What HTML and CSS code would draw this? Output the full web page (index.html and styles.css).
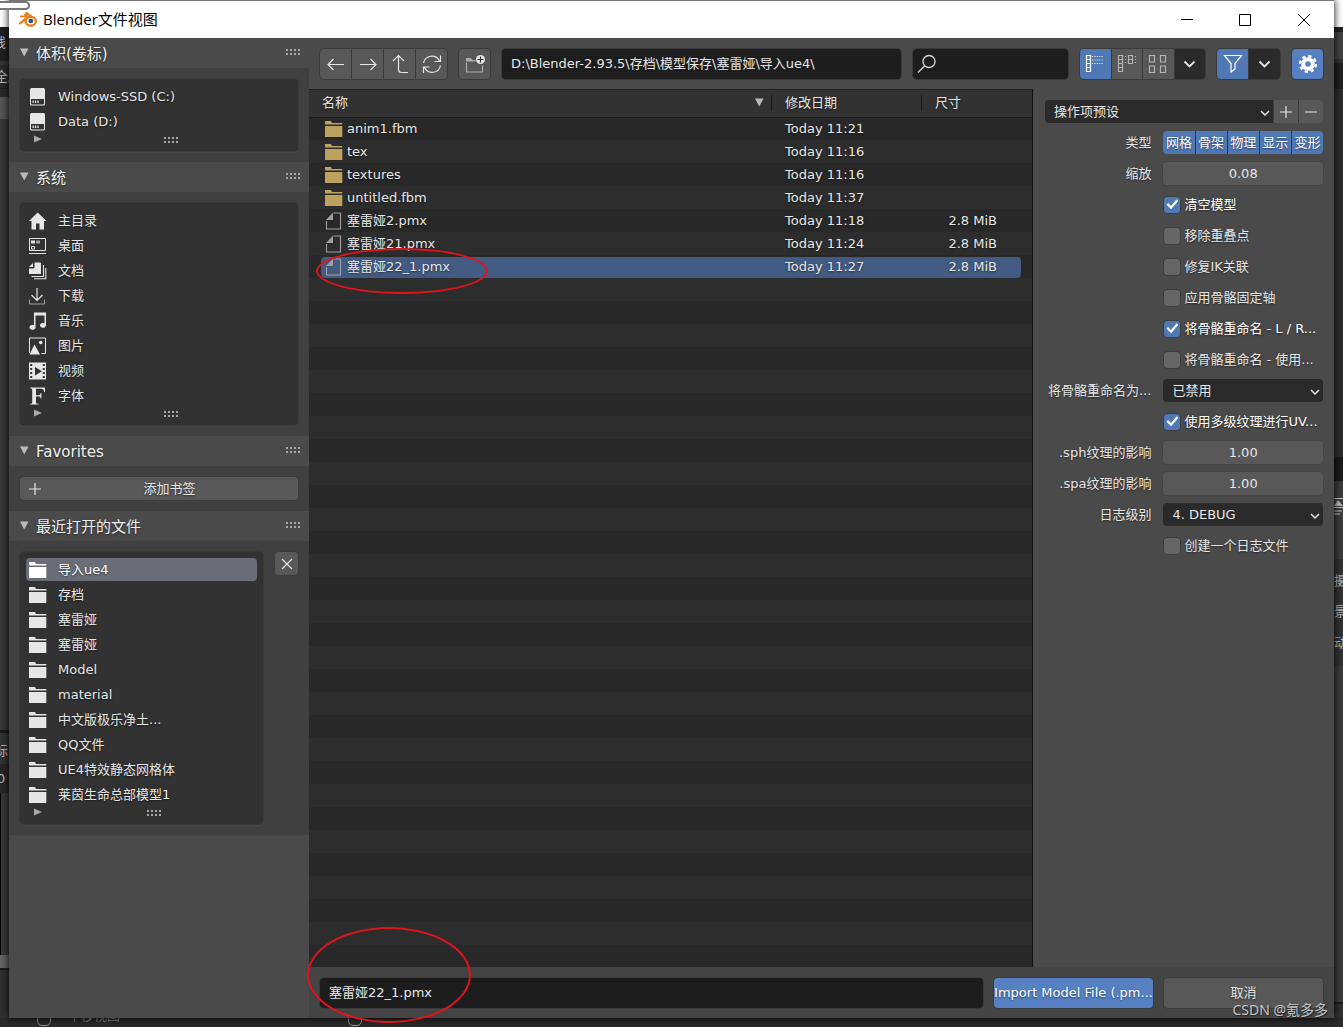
FILE: index.html
```html
<!DOCTYPE html>
<html lang="zh-CN">
<head>
<meta charset="utf-8">
<title>Blender文件视图</title>
<link rel="stylesheet" href="styles.css">
</head>
<body>
<svg class="sprite" aria-hidden="true">
  <symbol id="tri-down" viewBox="0 0 9 9"><path d="M0 0.500H8.500L4.250 8.500z"/></symbol>
  <symbol id="tri-right" viewBox="0 0 8 8"><path d="M0 0.500V7.500L8 4z"/></symbol>
  <symbol id="chevron" viewBox="0 0 12 8"><path d="M2 2l4 4 4-4" fill="none" stroke="currentColor" stroke-width="1.500"/></symbol>
  <symbol id="disk" viewBox="0 0 18 18"><path d="M2.500 0h12A1.500 1.500 0 0 1 16 1.500V16a1.500 1.500 0 0 1-1.500 1.500h-12A1.500 1.500 0 0 1 1 16V1.500A1.500 1.500 0 0 1 2.500 0zM2 11v4.500a1 1 0 0 0 1 1h11a1 1 0 0 0 1-1V11z" fill-rule="evenodd"/><path d="M3.500 12.500h1.300v2.500H3.500zM5.900 12.500h1.300v2.500H5.900zM8.300 12.500h1.300v2.500H8.300z"/></symbol>
  <symbol id="home" viewBox="0 0 18 18"><path d="M8.700 0.500L0 9h2.500v8.500H7v-6h3.500v6h4.500V9h2.500z"/></symbol>
  <symbol id="desktop" viewBox="0 0 18 18"><path d="M0.500 1.500h16v12h-16zM0 16.500h17" fill="none" stroke="currentColor" stroke-width="1"/><path d="M2 3.500h4v3H2z"/><path d="M7 3.500h4v3H7z" opacity=".6"/><path d="M2.500 9.500h3v2.500h-3z" fill="none" stroke="currentColor"/></symbol>
  <symbol id="docs" viewBox="0 0 18 18"><path d="M5.500 0.500H11a1 1 0 0 1 1 1V12H0V6.500h4.500a1 1 0 0 0 1-1z"/><path d="M4 1v4H0z"/><path d="M14.500 3v11.500H2.500M16.800 6v10.800H5" fill="none" stroke="currentColor" stroke-width="1.100"/></symbol>
  <symbol id="download" viewBox="0 0 18 18"><path d="M8 1v12M2.500 8L8 13.500 13.500 8" fill="none" stroke="currentColor" stroke-width="1.200"/><path d="M0.500 12.500v4.500h15v-4.500" fill="none" stroke="currentColor" opacity=".6"/></symbol>
  <symbol id="music" viewBox="0 0 18 18"><path d="M5 0.500h12v13a3 2.500 0 1 1-1.500-2.300V3.500h-9v12a3 2.500 0 1 1-1.500-2.300z"/></symbol>
  <symbol id="picture" viewBox="0 0 18 18"><path d="M0.500 16V1h16v15.500h-4" fill="none" stroke="currentColor"/><path d="M0.500 17.500l5-10 5.500 10z"/><circle cx="11.700" cy="5.500" r="1.800"/></symbol>
  <symbol id="video" viewBox="0 0 18 18"><path d="M0 0.500h17V17.500H0zM1.200 2v2h2V2zm0 4v2h2V6zm0 4v2h2v-2zm0 4v2h2v-2zM13.800 2v2h2V2zm0 4v2h2V6zm0 4v2h2v-2zm0 4v2h2v-2zM6 5v8.500l7-4.200z" fill-rule="evenodd"/></symbol>
  <symbol id="font" viewBox="0 0 18 18"><path d="M1 0.500h15v4.500h-.8c-.4-2.300-1.200-3.200-3.200-3.200H7v6.400h2.500c1.500 0 2-.7 2.200-2.200h.7v5.600h-.7c-.2-1.600-.8-2.200-2.200-2.200H7v5.600c0 1.400.5 1.700 2.500 1.800v.8H1v-.8c1.700-.1 2.200-.4 2.200-1.800V3.300c0-1.400-.5-1.800-2.200-2z"/></symbol>
  <symbol id="folder" viewBox="0 0 18 18"><path d="M0 1h6l1 2H17.300v1.500H0z"/><path d="M0 6h17.300v11H0z"/></symbol>
  <symbol id="file" viewBox="0 0 18 18"><path d="M8.500 1h7v16H1.500V9" fill="none" stroke="currentColor" stroke-width="1.100"/><path d="M8 0.500V8H1z"/></symbol>
  <symbol id="dots" viewBox="0 0 15 7"><path d="M0 0h2v2H0zM4 0h2v2H4zM8 0h2v2H8zM12 0h2v2h-2zM0 4h2v2H0zM4 4h2v2H4zM8 4h2v2H8zM12 4h2v2h-2z"/></symbol>
</svg>

<div class="desk desk-left" aria-hidden="true">
  <div class="l-white"></div><div class="l-tab">线</div><div class="l-tool">全局</div>
  <div class="l-chip"></div><div class="l-view"></div><div class="l-label">标</div><div class="l-num">0</div>
  <div class="l-track"></div><div class="l-scroll"></div><div class="l-foot"></div>
</div>

<main class="window">
  <header class="titlebar">
    <svg class="logo" viewBox="0 0 20 16"><path d="M1 4.200h8L6.500 2.300 8 0.500l8.500 6.200" fill="none" stroke="#ea7f13" stroke-width="2"/><path d="M0.500 12L9 5" stroke="#ea7f13" stroke-width="2.400"/><ellipse cx="12.300" cy="9.300" rx="5.400" ry="4.700" fill="#fff" stroke="#ea7f13" stroke-width="2.400"/><ellipse cx="12.500" cy="9" rx="2.600" ry="2.300" fill="#265787"/></svg>
    <h1>Blender文件视图</h1>
    <button aria-label="最小化"><svg viewBox="0 0 12 12"><path d="M0 5.500h12"/></svg></button>
    <button aria-label="最大化"><svg viewBox="0 0 12 12"><path d="M0.500 0.500h11v11H0.500z"/></svg></button>
    <button aria-label="关闭"><svg viewBox="0 0 12 12"><path d="M0 0l12 12M12 0L0 12"/></svg></button>
  </header>

  <div class="content">
    <aside class="sidebar">
      <section>
        <h2><svg class="tri"><use href="#tri-down"/></svg><span>体积(卷标)</span><svg class="grip"><use href="#dots"/></svg></h2>
        <div class="pane"><div class="box">
          <ul>
            <li><a href="#c"><svg><use href="#disk"/></svg>Windows-SSD (C:)</a></li>
            <li><a href="#d"><svg><use href="#disk"/></svg>Data (D:)</a></li>
          </ul>
          <div class="box-foot"><svg class="more"><use href="#tri-right"/></svg><svg class="grip"><use href="#dots"/></svg></div>
        </div></div>
      </section>
      <section>
        <h2><svg class="tri"><use href="#tri-down"/></svg><span>系统</span><svg class="grip"><use href="#dots"/></svg></h2>
        <div class="pane"><div class="box">
          <ul>
            <li><a href="#home"><svg><use href="#home"/></svg>主目录</a></li>
            <li><a href="#desktop"><svg><use href="#desktop"/></svg>桌面</a></li>
            <li><a href="#docs"><svg><use href="#docs"/></svg>文档</a></li>
            <li><a href="#download"><svg><use href="#download"/></svg>下载</a></li>
            <li><a href="#music"><svg><use href="#music"/></svg>音乐</a></li>
            <li><a href="#picture"><svg><use href="#picture"/></svg>图片</a></li>
            <li><a href="#video"><svg><use href="#video"/></svg>视频</a></li>
            <li><a href="#font"><svg><use href="#font"/></svg>字体</a></li>
          </ul>
          <div class="box-foot"><svg class="more"><use href="#tri-right"/></svg><svg class="grip"><use href="#dots"/></svg></div>
        </div></div>
      </section>
      <section>
        <h2><svg class="tri"><use href="#tri-down"/></svg><span>Favorites</span><svg class="grip"><use href="#dots"/></svg></h2>
        <div class="pane"><button class="btn add"><svg viewBox="0 0 12 12"><path d="M6 0v12M0 6h12"/></svg><span>添加书签</span></button></div>
      </section>
      <section>
        <h2><svg class="tri"><use href="#tri-down"/></svg><span>最近打开的文件</span><svg class="grip"><use href="#dots"/></svg></h2>
        <div class="pane recent"><div class="box">
          <ul>
            <li><a class="current" href="#r1"><svg><use href="#folder"/></svg>导入ue4</a></li>
            <li><a href="#r2"><svg><use href="#folder"/></svg>存档</a></li>
            <li><a href="#r3"><svg><use href="#folder"/></svg>塞雷娅</a></li>
            <li><a href="#r4"><svg><use href="#folder"/></svg>塞雷娅</a></li>
            <li><a href="#r5"><svg><use href="#folder"/></svg>Model</a></li>
            <li><a href="#r6"><svg><use href="#folder"/></svg>material</a></li>
            <li><a href="#r7"><svg><use href="#folder"/></svg>中文版极乐净土...</a></li>
            <li><a href="#r8"><svg><use href="#folder"/></svg>QQ文件</a></li>
            <li><a href="#r9"><svg><use href="#folder"/></svg>UE4特效静态网格体</a></li>
            <li><a href="#r10"><svg><use href="#folder"/></svg>莱茵生命总部模型1</a></li>
          </ul>
          <div class="box-foot"><svg class="more"><use href="#tri-right"/></svg><svg class="grip"><use href="#dots"/></svg></div>
        </div>
        <button class="btn clear" aria-label="清除"><svg viewBox="0 0 12 12"><path d="M1 1l10 10M11 1L1 11"/></svg></button></div>
      </section>
    </aside>

    <div class="browser">
      <div class="toolbar">
        <div class="group nav">
          <button aria-label="后退"><svg viewBox="0 0 20 20"><path d="M2 10.500h16M7.500 5L2 10.500 7.500 16"/></svg></button>
          <button aria-label="前进"><svg viewBox="0 0 20 20"><path d="M2 10.500h16M12.500 5l5.500 5.500-5.500 5.500"/></svg></button>
          <button aria-label="上一级"><svg viewBox="0 0 20 20"><path d="M3 7l5.500-5.500L14 7M8.500 1.500v14a3 3 0 0 0 3 3H18"/></svg></button>
          <button aria-label="刷新"><svg viewBox="0 0 20 20"><path d="M1.500 9A8.500 8.500 0 0 1 17.500 7M18.500 1.500V7.500H12.500M18.500 11.500A8.500 8.500 0 0 1 2.500 13.500M1.500 19v-6H7.500"/></svg></button>
        </div>
        <div class="group single"><button aria-label="新建文件夹"><svg viewBox="0 0 20 20"><g opacity=".6"><path d="M1.500 8.500v9.500h16V11.500"/><path d="M1 7.500V4h5l1 2h3.500v1.500z" fill="currentColor" stroke="none"/></g><circle cx="15.500" cy="5.500" r="4.500" fill="#e6e6e6" stroke="none"/><path d="M15.500 2.500v6M12.500 5.500h6" stroke="#333"/></svg></button></div>
        <input class="field path" type="text" aria-label="路径" value="D:\Blender-2.93.5\存档\模型保存\塞雷娅\导入ue4\">
        <label class="field search"><svg viewBox="0 0 20 20"><circle cx="12" cy="7.500" r="6"/><path d="M7.800 11.800L1 18.500"/></svg><input type="search" aria-label="搜索"></label>
        <div class="group views">
          <button class="on" aria-label="垂直列表"><svg viewBox="0 0 20 20"><path d="M1.500 1.500h4v16h-4zM1.500 5.500h4M1.500 9.500h4M1.500 13.500h4"/><path d="M7 2.500h12M7 6h12M7 9.500h12" stroke-dasharray="1 1.400"/></svg></button>
          <button class="dim" aria-label="水平列表"><svg viewBox="0 0 20 20"><path d="M1.500 1.500h4v16h-4zM1.500 5.500h4M1.500 9.500h4M1.500 13.500h4M11.500 1.500h4v8h-4zM11.500 5.500h4"/><path d="M8.500 2v8M18.500 2v8" stroke-dasharray="1 2"/></svg></button>
          <button class="dim" aria-label="缩略图"><svg viewBox="0 0 20 20"><path d="M1.500 1.500h5v6.500h-5zM12.500 1.500h5v6.500h-5zM1.500 12h5v6.500h-5zM12.500 12h5v6.500h-5z"/></svg></button>
          <button class="drop" aria-label="显示设置"><svg class="chev"><use href="#chevron"/></svg></button>
        </div>
        <div class="group filter">
          <button class="on" aria-label="过滤"><svg viewBox="0 0 20 20"><path d="M1.500 1.500h17l-6.500 8V15l-4 3V9.500z"/></svg></button>
          <button class="drop" aria-label="过滤设置"><svg class="chev"><use href="#chevron"/></svg></button>
        </div>
        <div class="group single"><button class="on bright" aria-label="选项"><svg viewBox="0 0 20 20"><circle cx="10" cy="10" r="4.800" stroke="#fff" stroke-width="4"/><circle cx="10" cy="10" r="7.800" stroke="#fff" stroke-width="2.500" stroke-dasharray="3.300 2.826"/></svg></button></div>
      </div>

      <div class="middle">
        <div class="files">
          <table>
            <colgroup><col><col class="c-date"><col class="c-size"></colgroup>
            <thead><tr><th><div>名称<svg class="tri"><use href="#tri-down"/></svg></div></th><th><div>修改日期</div></th><th><div>尺寸</div></th></tr></thead>
            <tbody>
              <tr><td><div><svg class="dir"><use href="#folder"/></svg>anim1.fbm</div></td><td><div>Today 11:21</div></td><td><div></div></td></tr>
              <tr><td><div><svg class="dir"><use href="#folder"/></svg>tex</div></td><td><div>Today 11:16</div></td><td><div></div></td></tr>
              <tr><td><div><svg class="dir"><use href="#folder"/></svg>textures</div></td><td><div>Today 11:16</div></td><td><div></div></td></tr>
              <tr><td><div><svg class="dir"><use href="#folder"/></svg>untitled.fbm</div></td><td><div>Today 11:37</div></td><td><div></div></td></tr>
              <tr><td><div><svg class="doc"><use href="#file"/></svg>塞雷娅2.pmx</div></td><td><div>Today 11:18</div></td><td><div>2.8 MiB</div></td></tr>
              <tr><td><div><svg class="doc"><use href="#file"/></svg>塞雷娅21.pmx</div></td><td><div>Today 11:24</div></td><td><div>2.8 MiB</div></td></tr>
              <tr class="selected"><td><div><svg class="doc"><use href="#file"/></svg>塞雷娅22_1.pmx</div></td><td><div>Today 11:27</div></td><td><div>2.8 MiB</div></td></tr>
            </tbody>
          </table>
        </div>

        <form class="options">
          <div class="preset">
            <div class="select"><select aria-label="操作项预设"><option>操作项预设</option></select><svg><use href="#chevron"/></svg></div>
            <button type="button" aria-label="添加预设"><svg viewBox="0 0 12 12"><path d="M6 0v12M0 6h12"/></svg></button>
            <button type="button" aria-label="删除预设"><svg viewBox="0 0 12 12"><path d="M0 6h12"/></svg></button>
          </div>
          <div class="opt"><span class="name">类型</span><div class="types"><button type="button">网格</button><button type="button">骨架</button><button type="button">物理</button><button type="button">显示</button><button type="button">变形</button></div></div>
          <div class="opt"><label class="name" for="scale">缩放</label><input class="num" id="scale" type="text" value="0.08"></div>
          <div class="opt"><label class="check"><input type="checkbox" checked><span>清空模型</span></label></div>
          <div class="opt"><label class="check"><input type="checkbox"><span>移除重叠点</span></label></div>
          <div class="opt"><label class="check"><input type="checkbox"><span>修复IK关联</span></label></div>
          <div class="opt"><label class="check"><input type="checkbox"><span>应用骨骼固定轴</span></label></div>
          <div class="opt"><label class="check"><input type="checkbox" checked><span>将骨骼重命名 - L / R...</span></label></div>
          <div class="opt"><label class="check"><input type="checkbox"><span>将骨骼重命名 - 使用...</span></label></div>
          <div class="opt"><label class="name" for="rename">将骨骼重命名为...</label><div class="select"><select id="rename"><option>已禁用</option></select><svg><use href="#chevron"/></svg></div></div>
          <div class="opt"><label class="check"><input type="checkbox" checked><span>使用多级纹理进行UV...</span></label></div>
          <div class="opt"><label class="name" for="sph">.sph纹理的影响</label><input class="num" id="sph" type="text" value="1.00"></div>
          <div class="opt"><label class="name" for="spa">.spa纹理的影响</label><input class="num" id="spa" type="text" value="1.00"></div>
          <div class="opt"><label class="name" for="log">日志级别</label><div class="select"><select id="log"><option>4. DEBUG</option></select><svg><use href="#chevron"/></svg></div></div>
          <div class="opt"><label class="check"><input type="checkbox"><span>创建一个日志文件</span></label></div>
        </form>
      </div>

      <div class="actions">
        <input class="field" type="text" aria-label="文件名" value="塞雷娅22_1.pmx">
        <button class="btn primary">Import Model File (.pm...</button>
        <button class="btn">取消</button>
      </div>
    </div>
  </div>
</main>

<div class="desk desk-right" aria-hidden="true">
  <div class="r-white"></div><div class="r-tab"></div><div class="r-tool"></div><div class="r-list"></div><div class="r-icon"></div>
  <div class="r-image"><svg viewBox="0 0 10 18"><path d="M0 1.500h10M0 10.500h10M0 14h8M0 17h6" stroke="#ccc" fill="none"/><path d="M0 9l4-6 5 6z"/></svg></div>
  <div class="r-text"><span>摄</span><span>景</span><span>动</span></div><div class="r-view"></div><div class="r-foot"></div>
</div>

<footer class="statusbar" aria-hidden="true"><i></i><span>平移视图</span><i class="second"></i></footer>

<div class="pill" aria-hidden="true"></div>
<div class="mark mark-file" aria-hidden="true"></div>
<div class="mark mark-name" aria-hidden="true"></div>
<div class="watermark">CSDN @氪多多</div>
</body>
</html>
```
FILE: styles.css
```css
* { box-sizing: border-box; }

body {
  margin: 0;
  position: relative;
  min-height: 100vh;
  display: grid;
  grid-template-columns: 9px minmax(0, 1fr) 9px;
  grid-template-rows: 1fr 9px;
  overflow: hidden;
  background: #2b2b2b;
  color: #e6e6e6;
  font: 13px/20px "DejaVu Sans", "Noto Sans CJK SC", sans-serif;
}

button, input, select { font: inherit; color: inherit; margin: 0; padding: 0; border: 0; outline: 0; }
a { color: inherit; text-decoration: none; }
ul { list-style: none; margin: 0; padding: 0; }
svg { display: block; flex: none; fill: currentColor; }
.sprite { position: absolute; width: 0; height: 0; }

/* Window frame */
.window { display: flex; flex-direction: column; min-width: 0; border-top: 1px solid #777; background: #4a4a4a; box-shadow: 0 0 8px #000; z-index: 1; }
.titlebar { display: flex; align-items: center; height: 37px; padding-left: 10px; background: #fff; color: #000; }
.titlebar h1 { flex: 1; margin: 0 0 0 5px; padding-bottom: 2px; font: 15px/20px "Open Sans", "Noto Sans CJK SC", sans-serif; }
.logo { width: 19px; height: 16px; }
.titlebar button { display: grid; place-items: center; width: 58px; height: 36px; background: none; }
.titlebar button:last-child { width: 60px; }
.titlebar button svg { width: 12px; height: 12px; fill: none; stroke: #000; }
.content { flex: 1; display: flex; min-height: 0; text-shadow: 0 1px 2px rgba(0, 0, 0, .5); }

/* Sidebar */
.sidebar { width: 300px; flex: none; }
.sidebar h2 { display: flex; align-items: center; height: 30px; margin: 0; padding: 0 8px 2px 11px; background: #4a4a4a; font-size: 15px; font-weight: 400; color: #f0f0f0; }
.sidebar h2 span { padding-top: 3px; }
.tri { width: 9px; height: 9px; color: #bbb; }
h2 .tri { margin-right: 7px; }
.grip { width: 15px; height: 7px; color: #a8a8a8; }
h2 .grip { margin-left: auto; }
.pane { padding: 11px; background: #404040; }
.box { flex: 1; padding: 5px 6px 0; border-radius: 4px; background: #323232; box-shadow: 0 0 0 1px #3a3a3a, 0 2px 0 #464646; }
.box li { height: 25px; padding: 1px 0; }
.box a { display: flex; align-items: center; gap: 11px; height: 23px; padding-left: 3px; border-radius: 4px; }
.box a svg { width: 18px; height: 18px; }
.box a.current { background: #696d77; color: #fff; }
.box-foot { display: grid; grid-template-columns: 20px 1fr 3px; height: 17px; padding-top: 1px; }
.box-foot .grip { justify-self: center; margin: 2px 0 0 8px; }
.more { width: 8px; height: 8px; margin-left: 8px; color: #a8a8a8; }
.btn { border-radius: 4px; background: #585858; box-shadow: 0 0 0 1px #3c3c3c; text-shadow: inherit; }
.add { display: flex; align-items: center; width: 100%; height: 23px; padding: 0 0 0 9px; }
.add span { flex: 1; }
.btn svg { width: 12px; height: 12px; fill: none; stroke: #e6e6e6; stroke-width: 1.2; }
.recent { display: flex; gap: 12px; }
.recent .box { padding-bottom: 1px; }
.recent .box-foot { height: 16px; }
.clear { display: grid; place-items: center; width: 23px; height: 23px; }

/* Toolbar */
.browser { flex: 1; display: flex; flex-direction: column; min-width: 0; }
.toolbar { display: flex; gap: 12px; height: 51px; padding: 11px 11px 10px; }
.group { display: flex; flex: none; gap: 1px; border-radius: 4px; overflow: hidden; background: #3a3a3a; box-shadow: 0 0 0 1px #3a3a3a; }
.group button { flex: 1; display: grid; place-items: center; background: #585858; }
.group svg { width: 20px; height: 20px; fill: none; stroke: currentColor; stroke-width: 1.2; }
.group .dim { color: #b4b4b4; }
.group .on { background: #5078b4; color: #fff; }
.group .bright { background: #5680c2; }
.group .drop { background: #2a2a2a; }
.group .chev { width: 15px; height: 10px; }
.nav { width: 127px; }
.single { width: 31px; }
.views { width: 125px; }
.filter { width: 63px; }
.field { min-width: 0; height: 30px; border-radius: 4px; background: #1d1d1d; box-shadow: 0 0 0 1px #3a3a3a; padding: 0 9px 3px; }
.path { flex: 400; }
.search { flex: 155; display: flex; align-items: center; gap: 4px; padding: 0 4px; }
.search svg { width: 20px; height: 20px; fill: none; stroke: #d8d8d8; stroke-width: 1.3; }
.search input { flex: 1; min-width: 0; background: none; }

/* File list */
.middle { flex: 1; display: flex; min-height: 0; }
.files { flex: 1; min-width: 0; border-right: 1px solid #111; background: repeating-linear-gradient(#282828 0 23px, #2d2d2d 23px 46px) 0 28px; }
table { width: 100%; table-layout: fixed; border-collapse: collapse; }
.c-date { width: 150px; }
.c-size { width: 110px; }
th { height: 28px; padding: 0 0 2px; background: #323232; border: solid #1c1c1c; border-width: 1px 0; font-weight: 400; text-align: left; }
th div { display: flex; align-items: center; justify-content: space-between; height: 16px; padding: 0 7px 0 13px; border-right: 1px solid #191919; }
th:last-child div { border: 0; }
td { height: 23px; padding: 0; }
td div { display: flex; align-items: center; height: 21px; }
td:nth-child(1) div { gap: 4px; margin-left: 12px; padding-left: 4px; border-radius: 4px 0 0 4px; }
td:nth-child(2) div { padding-left: 13px; }
td:nth-child(3) div { justify-content: flex-end; margin-right: 11px; padding-right: 24px; border-radius: 0 4px 4px 0; }
td svg { width: 18px; height: 18px; }
.dir { color: #bda15f; }
.doc { color: #a0a0a0; }
.selected div { background: #435b82; }

/* Import options */
.options { width: 301px; flex: none; display: flex; flex-direction: column; gap: 8px; padding: 11px 11px 11px 12px; }
.preset { display: grid; grid-template-columns: minmax(0, 1fr) 24px 24px; gap: 1px; height: 23px; border-radius: 4px; overflow: hidden; background: #3a3a3a; }
.preset button { display: grid; place-items: center; background: #585858; }
.preset button svg { width: 12px; height: 12px; fill: none; stroke: #e6e6e6; stroke-width: 1.2; }
.opt { display: grid; grid-template-columns: minmax(0, 2fr) minmax(0, 3fr); column-gap: 12px; align-items: center; height: 23px; white-space: nowrap; }
.name { text-align: right; }
.opt > :last-child { grid-column: 2; }
.types { display: flex; gap: 1px; height: 23px; border-radius: 4px; overflow: hidden; background: #333; }
.types button { flex: 1; background: #5078b4; color: #fff; text-shadow: inherit; }
.num { width: 100%; height: 23px; border-radius: 4px; background: #585858; box-shadow: 0 0 0 1px #444; text-align: center; }
.select { position: relative; height: 23px; }
.select select { appearance: none; width: 100%; height: 23px; padding: 0 9px; border-radius: 4px; background: #2a2a2a; }
.preset select { border-radius: 4px 0 0 4px; }
.select svg { position: absolute; right: 2px; top: 9px; width: 12px; height: 8px; pointer-events: none; }
.check { display: flex; align-items: center; gap: 3px; }
.check input { appearance: none; display: grid; place-items: center; flex: none; width: 18px; height: 18px; border: 1px solid #3c3c3c; border-radius: 4px; background: #656565; }
.check input:checked { background: #5078b4; }
.check input:checked::after { content: ""; width: 12px; height: 12px; background: #fff; clip-path: polygon(0 52%, 14% 38%, 38% 62%, 86% 6%, 100% 18%, 40% 90%); }
.check input:checked + span { color: #fff; }

/* Bottom action bar */
.actions { display: flex; gap: 11px; height: 51px; padding: 11px 11px 10px; background: #444; }
.actions .field { flex: 1; }
.actions .btn { width: 159px; height: 30px; white-space: nowrap; }
.actions .primary { background: #5680c2; color: #fff; }

/* Parts of the main application that show round the window */
.desk { display: flex; flex-direction: column; overflow: hidden; color: #bbb; white-space: nowrap; }
.desk > * { flex: none; overflow: hidden; }
.l-white, .r-white { height: 27px; background: #fff; }
.l-tab { height: 34px; padding-top: 6px; background: #202020; text-indent: -7px; }
.l-tool { height: 28px; padding-top: 2px; background: #2b2b2b; border-top: 4px solid #333; border-bottom: 1px solid #222; text-indent: -5px; }
.l-chip { height: 22px; margin-top: 8px; background: #555; }
.desk .l-view { flex: 610; background: #393939; }
.l-label { height: 34px; padding-top: 8px; border-top: 3px solid #1a1a1a; background: #333; text-indent: -5px; }
.l-num { height: 29px; padding-top: 5px; background: #282828; text-indent: -3px; }
.desk .l-track { flex: 162; background: #393939; border-left: 1px solid #000; }
.l-scroll { height: 13px; background: #666; }
.l-foot { height: 50px; border-top: 2px solid #1a1a1a; background: #303030; }
.r-tab { height: 32px; background: #444; border-top: 5px solid #222; }
.r-tool { height: 30px; background: #202020; border-top: 4px solid #333; }
.desk .r-list { flex: 368; background: #2d2d2d; }
.r-icon { height: 24px; background: #1a1a1a; }
.r-image { height: 78px; padding-top: 16px; background: #3d3d3d; }
.r-image svg { width: 10px; height: 18px; }
.r-text { display: flex; flex-direction: column; gap: 11px; height: 107px; padding-top: 12px; background: #333; }
.desk .r-view { flex: 336; background: #3d3d3d; }
.r-foot { height: 16px; border-top: 2px solid #1a1a1a; background: #303030; }
.statusbar { grid-column: 1 / -1; display: flex; align-items: flex-end; height: 9px; padding-left: 37px; overflow: hidden; background: #2a2a2a; color: #8a8a8a; }
.statusbar i { width: 14px; height: 22px; margin-bottom: 1px; border: 1px solid #999; border-radius: 5px; }
.statusbar span { width: 280px; margin: 0 0 1px 17px; }

/* Red markings and other overlays */
.pill { position: absolute; z-index: 2; left: -12px; top: 1px; width: 42px; height: 9px; border: 2px solid #777; border-left: 0; border-radius: 5px; background: #fff; }
.mark { position: absolute; z-index: 2; border: 2px solid #e0141c; border-radius: 50%; pointer-events: none; }
.mark-file { left: 316px; top: 248px; width: 172px; height: 46px; }
.mark-name { left: 307px; bottom: 4px; width: 164px; height: 96px; }
.watermark { position: absolute; z-index: 2; right: 15px; bottom: 7px; font: 14px/20px "DejaVu Sans", "Noto Sans CJK SC", sans-serif; font-family: "Noto Sans", "Noto Sans CJK SC", sans-serif; color: #c4c4c4; text-shadow: 1px 1px 1px #222; }
```
